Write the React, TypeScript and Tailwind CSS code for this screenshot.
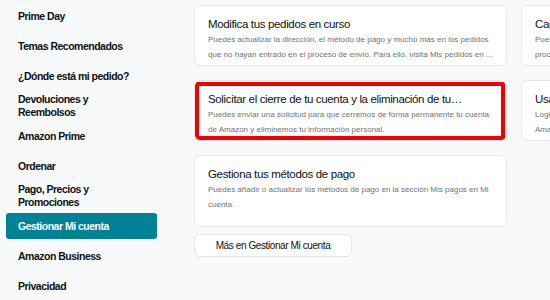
import React from "react";

const topics = [
  { label: ["Prime Day"] },
  { label: ["Temas Recomendados"] },
  { label: ["¿Dónde está mi pedido?"] },
  { label: ["Devoluciones y", "Reembolsos"] },
  { label: ["Amazon Prime"] },
  { label: ["Ordenar"] },
  { label: ["Pago, Precios y", "Promociones"] },
  { label: ["Gestionar Mi cuenta"], active: true },
  { label: ["Amazon Business"] },
  { label: ["Privacidad"] },
];

const cards = [
  {
    title: "Modifica tus pedidos en curso",
    lines: [
      "Puedes actualizar la dirección, el método de pago y mucho más en los pedidos",
      "que no hayan entrado en el proceso de envío. Para ello, visita Mis pedidos en ...",
    ],
    h: "h-[61px]",
  },
  {
    title: "Cancela artículos o pedidos",
    lines: [
      "Puedes cancelar artículos o pedidos que aún no hayan entrado en el",
      "proceso de envío desde Mis pedidos.",
    ],
    h: "h-[61px]",
  },
  {
    title: "Solicitar el cierre de tu cuenta y la eliminación de tu…",
    lines: [
      "Puedes enviar una solicitud para que cerremos de forma permanente tu cuenta",
      "de Amazon y eliminemos tu información personal.",
    ],
    h: "h-[61px]",
    marked: true,
  },
  {
    title: "Usa Login con Amazon",
    lines: [
      "Login con Amazon te permite iniciar sesión en otros sitios web con tu cuenta de",
      "Amazon de forma segura.",
    ],
    h: "h-[61px]",
  },
  {
    title: "Gestiona tus métodos de pago",
    lines: [
      "Puedes añadir o actualizar los métodos de pago en la sección Mis pagos en Mi",
      "cuenta.",
    ],
    h: "h-[72px]",
  },
];

export default function App() {
  return (
    <div
      className="flex w-[550px] h-[300px] overflow-hidden bg-[#f7f9fa] text-[#0f1111]"
      style={{ fontFamily: '"Liberation Sans", Arial, sans-serif' }}
    >
      {/* Sidebar */}
      <nav className="w-[194px] shrink-0 pl-[6px] pt-[3px] flex flex-col gap-[4px]">
        {topics.map((t, i) => (
          <div
            key={i}
            className={`w-[151px] h-[26px] shrink-0 flex flex-col justify-center pl-3 rounded-[3px] text-[10.5px] leading-[13px] tracking-[-0.5px] font-bold ${
              t.active ? "bg-[#008296] text-white" : "text-[#0f1111]"
            }`}
          >
            {t.label.map((l, j) => (
              <span key={j} className="whitespace-nowrap">
                {l}
              </span>
            ))}
          </div>
        ))}
      </nav>

      {/* Main */}
      <main className="pt-[5px] shrink-0">
        <div className="grid grid-cols-[313px_313px] gap-[14px] items-start">
          {cards.map((c, i) => (
            <div
              key={i}
              className={`relative ${c.h} bg-white border border-[#e6e9ea] rounded-[6px] px-[13px] pt-[10px] overflow-hidden`}
            >
              <div className="text-[11.5px] leading-[16px] tracking-[-0.35px] whitespace-nowrap">{c.title}</div>
              <div className="mt-[1px] text-[8px] leading-[14.5px] text-[#6f7373] whitespace-nowrap">
                {c.lines.map((l, j) => (
                  <div key={j}>{l}</div>
                ))}
              </div>
              {c.marked && (
                <div className="absolute left-0 right-px top-[1px] bottom-0 border-[4px] border-[#f00000] rounded-[2px]" />
              )}
            </div>
          ))}
        </div>
        <button className="mt-[7px] w-[158px] h-[23px] bg-white border border-[#e3e6e6] rounded-[6px] text-[10px] tracking-[-0.4px] text-[#0f1111]">
          Más en Gestionar Mi cuenta
        </button>
      </main>
    </div>
  );
}
